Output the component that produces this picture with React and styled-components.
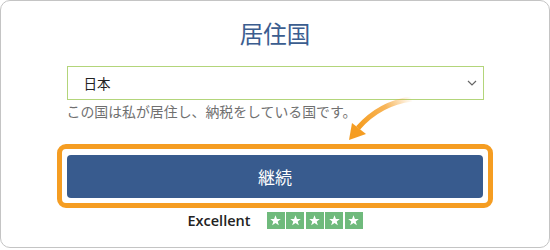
import React from "react";
import styled, { createGlobalStyle } from "styled-components";

const Global = createGlobalStyle`
  html, body {
    margin: 0;
    padding: 0;
    background: #ffffff;
  }
  body {
    font-family: "Noto Sans CJK JP", "Noto Sans", sans-serif;
  }
`;

const Card = styled.div`
  position: relative;
  box-sizing: border-box;
  width: 550px;
  height: 248px;
  border: 1px solid #c4c4c4;
  border-radius: 10px;
  background: #fff;
  display: flex;
  flex-direction: column;
  align-items: center;
  padding-top: 17px;
`;

const Title = styled.h1`
  margin: 0;
  font-size: 23.5px;
  line-height: 30px;
  font-weight: 400;
  color: #3b5d8f;
`;

const Field = styled.div`
  width: 417px;
  margin-top: 18px;
  display: flex;
  flex-direction: column;
`;

const Select = styled.div`
  box-sizing: border-box;
  height: 34px;
  border: 1px solid #b3d57a;
  display: flex;
  align-items: center;
  justify-content: space-between;
  padding: 0 5px 0 16px;
  font-size: 13.5px;
  color: #222;
`;

const Hint = styled.p`
  margin: 2px 0 0 0;
  font-size: 13.9px;
  line-height: 18px;
  color: #707070;
`;

const Highlight = styled.div`
  box-sizing: border-box;
  width: 436px;
  margin-top: 24px;
  border: 5px solid #f59d22;
  border-radius: 9px;
  padding: 6px 5px 5px;
`;

const Button = styled.button`
  display: block;
  width: 100%;
  height: 43px;
  border: none;
  border-radius: 4px;
  background: #385b8e;
  color: #fff;
  font-family: "Noto Sans CJK JP", sans-serif;
  font-size: 17px;
`;

const Rating = styled.div`
  display: flex;
  align-items: center;
  gap: 16px;
  margin-top: 3px;
`;

const Label = styled.span`
  font-family: "Open Sans", "Liberation Sans", sans-serif;
  font-weight: 600;
  font-size: 14.5px;
  color: #222;
`;

const Stars = styled.div`
  display: flex;
  gap: 1.5px;
`;

const Star = styled.span`
  width: 18px;
  height: 17px;
  background: #6fba7c;
  display: flex;
  align-items: center;
  justify-content: center;
`;

const Overlay = styled.svg`
  position: absolute;
  left: -1px;
  top: -1px;
  pointer-events: none;
`;

function Chevron() {
  return (
    <svg width="12" height="8" viewBox="0 0 12 8">
      <path d="M2 2 L6 6 L10 2" fill="none" stroke="#666" strokeWidth="1.2" />
    </svg>
  );
}

function StarGlyph() {
  return (
    <svg width="13" height="13" viewBox="0 0 24 24">
      <path
        fill="#fff"
        d="M12 2.5 L14.6 9.3 L21.8 9.4 L16.1 13.9 L18.2 20.9 L12 16.8 L5.8 20.9 L7.9 13.9 L2.2 9.4 L9.4 9.3 Z"
      />
    </svg>
  );
}

export default function App() {
  return (
    <>
      <Global />
      <Card>
        <Title>居住国</Title>
        <Field>
          <Select>
            <span>日本</span>
            <Chevron />
          </Select>
          <Hint>この国は私が居住し、納税をしている国です。</Hint>
        </Field>
        <Highlight>
          <Button>継続</Button>
        </Highlight>
        <Rating>
          <Label>Excellent</Label>
          <Stars>
            {[0, 1, 2, 3, 4].map((i) => (
              <Star key={i}>
                <StarGlyph />
              </Star>
            ))}
          </Stars>
        </Rating>
        <Overlay width="550" height="250" viewBox="0 0 550 250">
          <defs>
            <linearGradient id="arrowFade" x1="412" y1="99" x2="360" y2="128" gradientUnits="userSpaceOnUse">
              <stop offset="0" stopColor="#f59d22" stopOpacity="0" />
              <stop offset="0.45" stopColor="#f59d22" stopOpacity="0.75" />
              <stop offset="1" stopColor="#f59d22" stopOpacity="1" />
            </linearGradient>
          </defs>
          <path
            d="M412 99 Q380 103 358 128"
            fill="none"
            stroke="url(#arrowFade)"
            strokeWidth="5"
          />
          <polygon points="349,140 352,123 366,134" fill="#f59d22" />
        </Overlay>
      </Card>
    </>
  );
}
